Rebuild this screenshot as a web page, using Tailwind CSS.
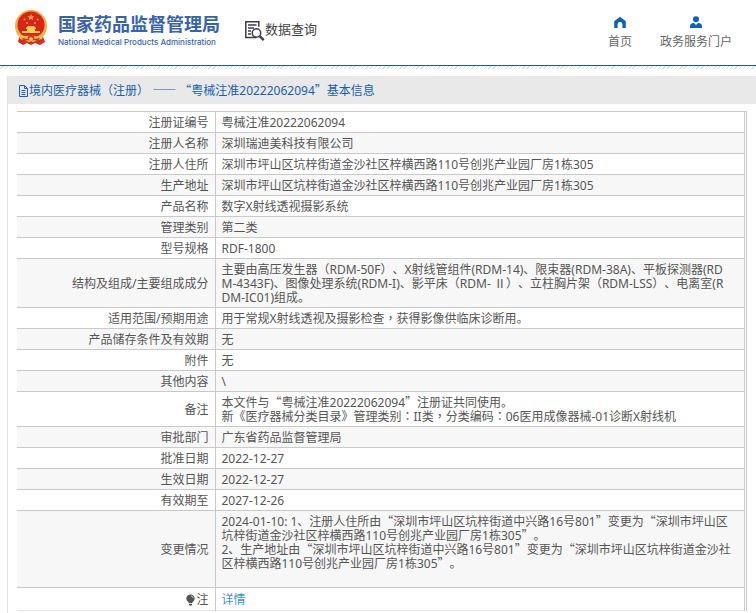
<!DOCTYPE html>
<html lang="zh-CN">
<head>
<meta charset="utf-8">
<meta name="viewport" content="width=device-width, initial-scale=1">
<title>国家药品监督管理局 数据查询</title>
<script src="https://cdn.jsdelivr.net/npm/@tailwindcss/browser@4"></script>
</head>
<body class="bg-white text-[12px] leading-[14px] text-[#555] font-['Noto_Sans','Noto_Sans_CJK_SC',sans-serif] [text-spacing-trim:space-all]">
<header class="flex h-[66px] items-start justify-between border-b border-[#1b5c96] pl-[14px] pr-6">
  <div class="flex items-start">
    <a href="#" class="flex items-start gap-[10px] pt-[9px] text-[#3763b0]">
      <svg class="h-[37px] w-[34px]" viewBox="0 0 34 37" aria-hidden="true">
        <path d="M6 25l-2 8 5 3 4-2 4 2 4-2 5 2 5-3-3-8z" fill="#d92b22"/>
        <circle cx="17" cy="17" r="16" fill="#e8b441"/>
        <circle cx="17" cy="16" r="13.500" fill="#dd2219"/>
        <path d="M17 5l1 2.300h2.500l-2 1.500.8 2.400-2.300-1.500-2.300 1.500.8-2.400-2-1.500H16z" fill="#f6b53a"/>
        <g fill="#f6b53a"><circle cx="10.500" cy="10.500" r="1"/><circle cx="23.500" cy="10.500" r="1"/><circle cx="13" cy="14" r="1"/><circle cx="21" cy="14" r="1"/></g>
        <path d="M12 19l2-2h6l2 2v1h-1v2h5v2H8v-2h5v-2h-1z" fill="#f7cf50"/>
        <path d="M4 24c4 3 8 4 13 2 5 2 9 1 13-2l-2 6c-3 1-6 1-8-1a3 3 0 0 0-6 0c-2 2-5 2-8 1z" fill="#edc04b"/>
        <path d="M8 29l5 1 4-3 4 3 5-1-2 3-5-1-2 2-2-2-5 1z" fill="#d92b22"/>
        <circle cx="17" cy="30" r="2" fill="#f3c64f"/>
      </svg>
      <span class="flex flex-col pt-[4px]">
        <span class="text-[18px] font-bold leading-[22px]">国家药品监督管理局</span>
        <span class="text-[8px] font-medium leading-[14px] font-['Inter',sans-serif]">National Medical Products Administration</span>
      </span>
    </a>
    <h1 class="flex items-start pl-[24px] pt-[20px] text-[13px] leading-[18px] text-[#444]">
      <svg class="h-[22px] w-[21px]" viewBox="0 0 21 22" fill="none" stroke="#3d3d45" stroke-width="1.500" aria-hidden="true">
        <path d="M12 17.500H1.800V1.800h13v5M4 5h8.500M4 8h6M4 11h3M4 14h3"/>
        <circle cx="12.500" cy="13" r="4.200"/>
        <path d="M15.700 16.200l4 4" stroke-width="2.500"/>
      </svg>
      数据查询
    </h1>
  </div>
  <nav class="flex gap-[28px] pt-[16px] text-[#666]">
    <a href="#" class="flex flex-col items-center gap-[5px]">
      <svg class="h-[13px] w-[14px]" viewBox="0 0 14 13" fill="#0d62bd" aria-hidden="true"><path d="M7 .8l5.800 4.400V12H9.400V8.500a2.400 2.400 0 0 0-4.800 0V12H1.200V5.200z"/></svg>
      <span class="leading-[16px]">首页</span>
    </a>
    <a href="#" class="flex flex-col items-center gap-[5px]">
      <svg class="h-[13px] w-[14px]" viewBox="0 0 14 13" fill="#0d62bd" aria-hidden="true"><circle cx="7" cy="3.200" r="3"/><path d="M1 12V10c0-2 1.500-3 4-3l2 2 2-2c2.500 0 4 1 4 3v2z"/></svg>
      <span class="leading-[16px]">政务服务门户</span>
    </a>
  </nav>
</header>
<div class="h-[3px] bg-[repeating-linear-gradient(135deg,#ffffff_0px,#ffffff_2px,#d5e2ea_2px,#d5e2ea_3px)]"></div>
<main class="ml-[7px] mt-[7px] border-l border-[#e2e2e2] pb-[2px]">
  <h2 class="flex h-[28px] items-center bg-[#e9e9e9] pl-[10px] pt-px text-[#1560b5]">
    <svg class="h-[12px] w-[11px]" viewBox="0 0 11 12" fill="none" stroke="#1560b5" aria-hidden="true"><path d="M1.500.5h5l3 3v8h-8zM6.500.5v3h3M3.500 5.500h4M3.500 7.500h4M3.500 9.500h4"/></svg>
    <span>境内医疗器械（注册） <span class="font-['Noto_Sans_CJK_SC',sans-serif] leading-none">——</span> <span class="font-['Noto_Sans_CJK_SC',sans-serif] leading-none">“</span>粤械注准20222062094<span class="font-['Noto_Sans_CJK_SC',sans-serif] leading-none">”</span>基本信息</span>
  </h2>
  <div class="ml-[9px] mr-[9px] mt-[7px] border-r border-t border-[#c8c9cb] pr-px">
    <table class="w-full border-collapse [&_td]:break-all [&_td]:border-x [&_td]:border-[#c8c9cb] [&_td]:pl-[6px] [&_td]:pr-[2px] [&_td]:pt-[4px] [&_td]:pb-[2px] [&_th]:w-[198px] [&_th]:px-[6px] [&_th]:pt-[4px] [&_th]:pb-[2px] [&_th]:text-right [&_th]:font-normal [&_tr]:border-b [&_tr]:border-[#c8c9cb] [&_tr:nth-child(even)]:bg-[#f7f7f7] [&_tr:last-child]:border-[#e4e4e4] [&_i]:not-italic [&_i]:leading-[0] [&_i]:font-['Noto_Sans_CJK_SC',sans-serif]">
      <tbody>
        <tr><th scope="row">注册证编号</th><td>粤械注准20222062094</td></tr>
        <tr><th scope="row">注册人名称</th><td>深圳瑞迪美科技有限公司</td></tr>
        <tr><th scope="row">注册人住所</th><td>深圳市坪山区坑梓街道金沙社区梓横西路110号创兆产业园厂房1栋305</td></tr>
        <tr><th scope="row">生产地址</th><td>深圳市坪山区坑梓街道金沙社区梓横西路110号创兆产业园厂房1栋305</td></tr>
        <tr><th scope="row">产品名称</th><td>数字X射线透视摄影系统</td></tr>
        <tr><th scope="row">管理类别</th><td>第二类</td></tr>
        <tr><th scope="row">型号规格</th><td>RDF-1800</td></tr>
        <tr><th scope="row">结构及组成/主要组成成分</th><td>主要由高压发生器（RDM-50F）、X射线管组件(RDM-14)、限束器(RDM-38A)、平板探测器(RD<br>M-4343F)、图像处理系统(RDM-I)、影平床（RDM- <i>Ⅱ</i>）、立柱胸片架（RDM-LSS）、电离室(R<br>DM-IC01)组成。</td></tr>
        <tr><th scope="row">适用范围/预期用途</th><td>用于常规X射线透视及摄影检查<span lang="zh-TW" class="font-['Noto_Sans_CJK_TC',sans-serif] leading-[0]">，</span>获得影像供临床诊断用。</td></tr>
        <tr><th scope="row">产品储存条件及有效期</th><td>无</td></tr>
        <tr><th scope="row">附件</th><td>无</td></tr>
        <tr><th scope="row">其他内容</th><td>\</td></tr>
        <tr><th scope="row">备注</th><td>本文件与<i>“</i>粤械注准20222062094<i>”</i>注册证共同使用。<br>新《医疗器械分类目录》管理类别<span lang="zh-TW" class="font-['Noto_Sans_CJK_TC',sans-serif] leading-[0]">：</span>II类<span lang="zh-TW" class="font-['Noto_Sans_CJK_TC',sans-serif] leading-[0]">，</span>分类编码<span lang="zh-TW" class="font-['Noto_Sans_CJK_TC',sans-serif] leading-[0]">：</span>06医用成像器械-01诊断X射线机</td></tr>
        <tr><th scope="row">审批部门</th><td>广东省药品监督管理局</td></tr>
        <tr><th scope="row">批准日期</th><td>2022-12-27</td></tr>
        <tr><th scope="row">生效日期</th><td>2022-12-27</td></tr>
        <tr><th scope="row">有效期至</th><td>2027-12-26</td></tr>
        <tr><th scope="row">变更情况</th><td>2024-01-10: 1、注册人住所由<i>“</i>深圳市坪山区坑梓街道中兴路16号801<i>”</i>变更为<i>“</i>深圳市坪山区<br>坑梓街道金沙社区梓横西路110号创兆产业园厂房1栋305<i>”</i>。<br>2、生产地址由<i>“</i>深圳市坪山区坑梓街道中兴路16号801<i>”</i>变更为<i>“</i>深圳市坪山区坑梓街道金沙社<br>区梓横西路110号创兆产业园厂房1栋305<i>”</i>。<br><br></td></tr>
        <tr class="h-[23px]"><th scope="row"><span class="flex items-center justify-end"><svg class="h-[12px] w-[11px]" viewBox="0 0 11 12" fill="#555" aria-hidden="true"><path d="M5.500.5a4.200 4.200 0 0 1 4.200 4.200C9.700 7 7.500 7.500 7.200 9H3.800C3.500 7.500 1.300 7 1.300 4.700A4.200 4.200 0 0 1 5.500.5zM4 9.700h3V11l-1 .8H5L4 11z"/><path d="M6 2c1.300.2 2 .9 2.200 2" fill="none" stroke="#fff" stroke-width=".7"/></svg>注</span></th><td><a href="#" class="text-[#3c8de0]">详情</a></td></tr>
      </tbody>
    </table>
  </div>
</main>
</body>
</html>
